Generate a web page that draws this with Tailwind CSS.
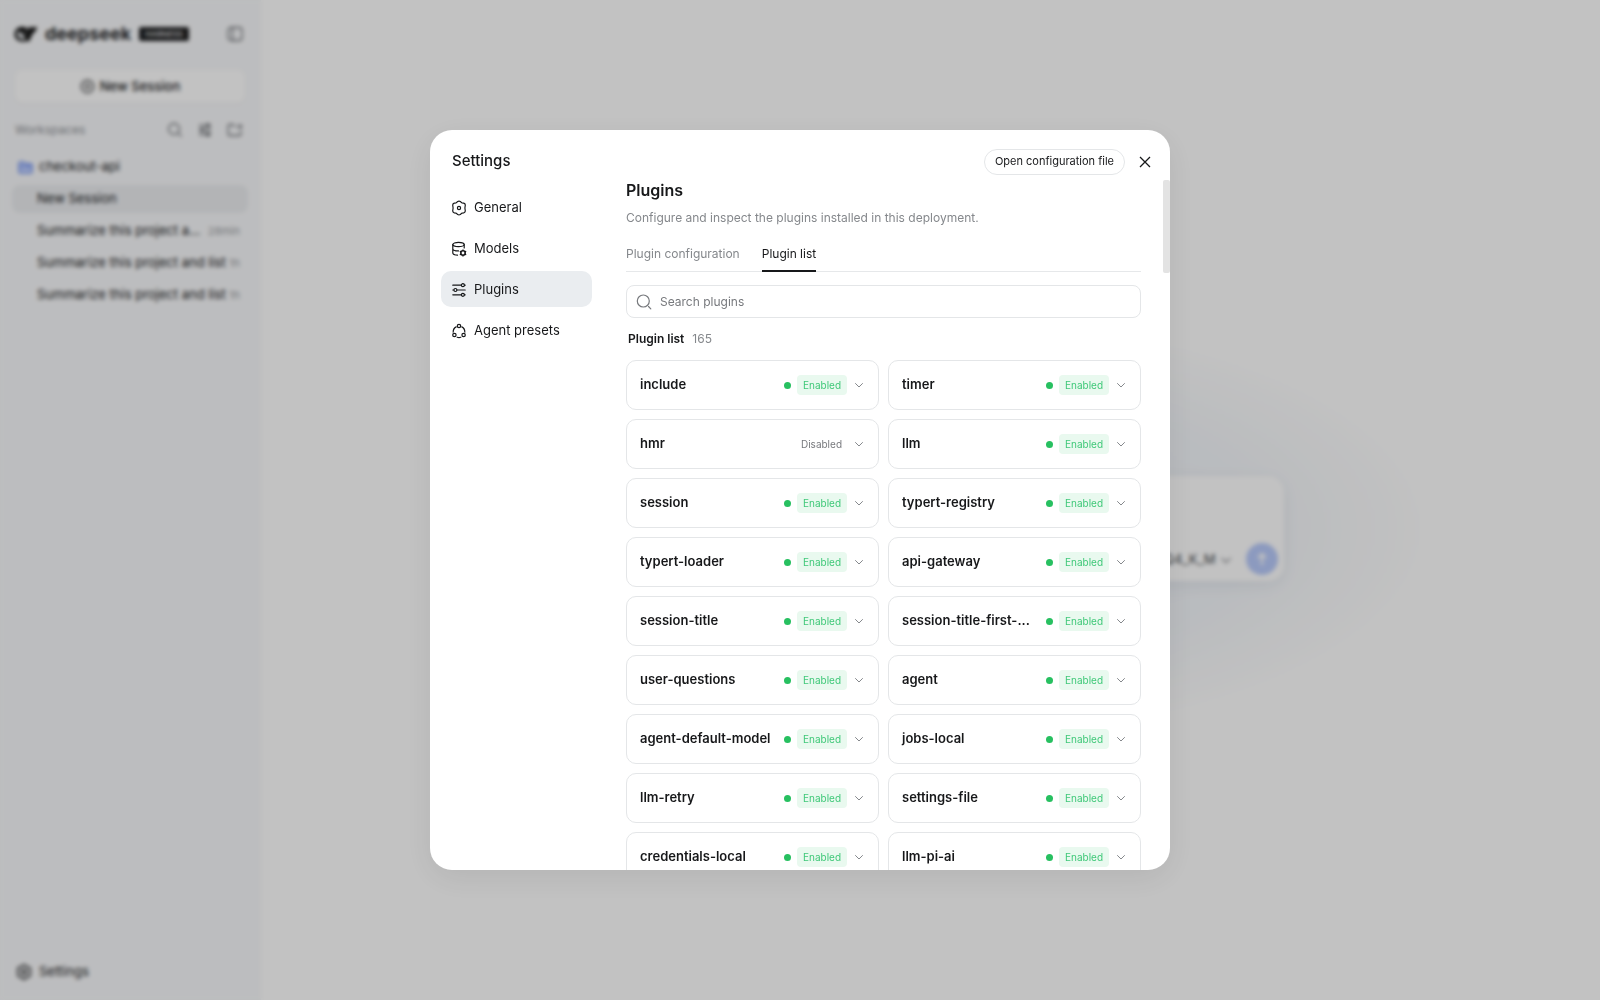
<!DOCTYPE html>
<html lang="en">

<head>
  <meta charset="UTF-8" />
  <meta name="viewport" content="width=device-width, initial-scale=1.0" />
  <title>Settings - Plugins</title>
  <script src="https://cdn.jsdelivr.net/npm/@tailwindcss/browser@4"></script>
</head>

<body class="h-screen overflow-hidden bg-white font-['Inter','Liberation_Sans',sans-serif] text-[#17181a]">

  <div class="flex h-full">
    <!-- sidebar -->
    <aside class="flex w-[261px] shrink-0 flex-col bg-[#f8f9fb] pr-[13px] pb-[15px] pl-3">
      <div class="flex items-center pt-[22px] pr-[5px] pl-[2px]">
        <svg class="h-[18px] w-6" viewBox="0 0 24 18" fill="none">
          <path d="M.5 9.500C.5 5 4 1.800 8 1.800c3 0 4.500 1.200 6.500 2.700.8-1.200.2-2.300.8-3.300.8 1.200 2 1.600 3.200 1.300C20 2 21.500 1.800 23 1.800c-.5 3.500-2 5.700-4.300 6.500-.7 3-1.900 5-3.500 6.300l1.500 1.600c-1.500.4-2.700 0-3.700-.5-1.200.6-2.500.9-4 .9-5 0-8.500-3-8.500-7.100Z" fill="#111" />
          <path d="M3 7c2.500-.8 5 .5 6.200 2.700.8 1.600 2 3 3.300 3.800C7.500 16 2.500 12.500 3 7Z" fill="#dcdee1" />
          <path d="M10.500 6.500c1.500 0 2.700 1 2.700 2.500" stroke="#dcdee1" />
        </svg>
        <span class="ml-[7px] text-[18px] leading-6 font-bold text-[#242527]">deepseek</span>
        <span class="ml-2 flex h-[14px] w-[50px] items-center justify-center rounded-[2px] bg-[#1d1e20] text-[8px] text-white">HARNESS</span>
        <button class="ml-auto text-[#66696e]" aria-label="Toggle sidebar">
          <svg class="size-4" viewBox="0 0 16 16" fill="none" stroke="currentColor" stroke-width="1.300">
            <rect x="1" y="1.500" width="14" height="13" rx="3" />
            <path d="M5.500 2v12" />
          </svg>
        </button>
      </div>

      <button class="mx-[3px] mt-6 flex h-[33px] items-center justify-center gap-[5px] rounded-lg bg-white text-[13px] font-medium shadow-[0_1px_2px_rgba(0,0,0,0.05)]">
        <svg class="size-[15px]" viewBox="0 0 16 16" fill="none" stroke="currentColor" stroke-width="1.300">
          <circle cx="8" cy="8" r="6.500" />
          <path d="M8 5v6M5 8h6" />
        </svg>
        New Session
      </button>

      <div class="mt-[15px] flex h-6 items-center gap-[14px] pr-[5px] pl-[3px] text-[#66696e]">
        <span class="mr-auto text-[12px] text-[#8b8e93]">Workspaces</span>
        <button aria-label="Search sessions">
          <svg class="size-4" viewBox="0 0 16 16" fill="none" stroke="currentColor" stroke-width="1.300">
            <circle cx="7" cy="7" r="5.500" />
            <path d="m11.500 11.500 3 3" />
          </svg>
        </button>
        <button aria-label="Filter sessions">
          <svg class="size-4" viewBox="0 0 16 16" fill="none" stroke="currentColor" stroke-width="1.300">
            <path d="M2 3.500h12M2 8h12M2 12.500h12" />
            <circle cx="11" cy="3.500" r="1.500" />
            <circle cx="5" cy="8" r="1.500" />
            <circle cx="11" cy="12.500" r="1.500" />
          </svg>
        </button>
        <button aria-label="Add workspace">
          <svg class="size-4" viewBox="0 0 16 16" fill="none" stroke="currentColor" stroke-width="1.300">
            <path d="M8.500 4H7L5.500 2.500h-3c-.8 0-1.300.5-1.300 1.300v8.400c0 .8.500 1.300 1.300 1.300h10c.8 0 1.300-.5 1.300-1.300V8.500M13 2v5M10.500 4.500h5" />
          </svg>
        </button>
      </div>

      <div class="mt-[13px] flex h-6 items-center gap-[6px] pl-[6px] text-[13px]">
        <svg class="size-[15px]" viewBox="0 0 16 16" fill="#c3d2ff" stroke="#6a8cee" stroke-width="1.400">
          <path d="M1 3.500C1 2.500 1.500 2 2.500 2H6l1.500 2h6c1 0 1.500.5 1.500 1.500v7c0 1-.5 1.500-1.500 1.500h-11C1.500 14 1 13.500 1 12.500z" />
          <path d="M1 7h14" />
        </svg>
        checkout-api
      </div>
      <ul class="mt-[6px] flex flex-col gap-1 text-[13px]">
        <li class="flex h-7 items-center rounded-lg bg-[#ebedf0] px-[25px]">New Session</li>
        <li class="flex h-7 items-center justify-between pr-2 pl-[25px] whitespace-nowrap">
          <span>Summarize this project a...</span>
          <span class="text-[11px] text-[#9a9da2]">28min</span>
        </li>
        <li class="flex h-7 items-center justify-between pr-2 pl-[25px] whitespace-nowrap">
          <span>Summarize this project and list</span>
          <span class="text-[11px] text-[#9a9da2]">1h</span>
        </li>
        <li class="flex h-7 items-center justify-between pr-2 pl-[25px] whitespace-nowrap">
          <span>Summarize this project and list</span>
          <span class="text-[11px] text-[#9a9da2]">1h</span>
        </li>
      </ul>

      <button class="mt-auto flex h-[26px] items-center gap-[7px] pl-1 text-[13px]">
        <svg class="size-4" viewBox="0 0 16 16" fill="none" stroke="currentColor" stroke-width="1.500" stroke-linejoin="round">
          <path d="M6.700 1.500Q8 .7 9.300 1.500L10.900 2.900 12.700 3.200Q14.200 3.600 14.300 5L13.900 8 14.300 11Q14.200 12.400 12.700 12.800L10.900 13.100 9.300 14.500Q8 15.300 6.700 14.500L5.100 13.100 3.300 12.800Q1.800 12.400 1.700 11L2.100 8 1.700 5Q1.800 3.600 3.300 3.200L5.100 2.900Z" />
          <circle cx="8" cy="8" r="2" />
        </svg>
        Settings
      </button>
    </aside>

    <!-- chat area -->
    <main class="flex min-w-0 flex-1 items-center justify-center pt-14">
      <div class="relative w-[706px]">
        <div class="absolute -inset-x-36 -inset-y-40 bg-[radial-gradient(closest-side,#f0f3f8_0%,#f4f7fb_65%,#ffffff_100%)]"></div>
        <div class="relative flex h-[105px] items-end justify-end gap-[14px] rounded-2xl bg-white p-[6px] shadow-[0_4px_16px_rgba(30,50,90,0.08)]">
          <div class="flex h-[30px] items-center gap-1 text-[13px] text-[#44474b]">
            Q4_K_M
            <svg class="size-3 text-[#8b8e93]" viewBox="0 0 12 12" fill="none" stroke="currentColor" stroke-width="1.300"><path d="m1.500 4 4.500 4.500L10.500 4" /></svg>
          </div>
          <button class="flex size-8 items-center justify-center rounded-full bg-[#b9cbfb] text-white" aria-label="Send">
            <svg class="size-4" viewBox="0 0 16 16" fill="none" stroke="currentColor" stroke-width="2"><path d="M8 14V3M4 7l4-4 4 4" /></svg>
          </button>
        </div>
      </div>
    </main>
  </div>

  <!-- settings dialog -->
  <div class="fixed inset-0 flex items-center justify-center bg-black/24 backdrop-blur-[2px]">
    <div class="relative flex h-[740px] max-h-full w-[740px] max-w-full flex-col overflow-hidden rounded-[22px] bg-white shadow-[0_8px_32px_rgba(0,0,0,0.08)]" role="dialog" aria-labelledby="dialogTitle">
      <header class="flex h-[50px] shrink-0 items-center pt-[13px] pr-3 pl-[22px]">
        <h1 id="dialogTitle" class="mr-auto text-[15px] font-medium">Settings</h1>
        <button class="h-[26px] rounded-full border border-[#e4e6e8] px-[10px] text-[11px]">Open configuration file</button>
        <button class="ml-[7px] flex size-[26px] items-center justify-center" aria-label="Close">
          <svg class="size-3" viewBox="0 0 12 12" fill="none" stroke="currentColor" stroke-width="1.300"><path d="m1 1 10 10M11 1 1 11" /></svg>
        </button>
      </header>

      <div class="flex min-h-0 flex-1">
        <nav class="flex w-[162px] shrink-0 flex-col gap-[5px] pt-[9px] pl-[11px] text-[13px]">
          <a href="#" class="flex h-9 items-center gap-[7px] rounded-[10px] px-[10px] pt-px">
            <svg class="size-4" viewBox="0 0 16 16" fill="none" stroke="currentColor" stroke-width="1.200" stroke-linejoin="round">
              <path d="M6.700 1.500Q8 .7 9.300 1.500L10.900 2.900 12.700 3.200Q14.200 3.600 14.300 5L13.900 8 14.300 11Q14.200 12.400 12.700 12.800L10.900 13.100 9.300 14.500Q8 15.300 6.700 14.500L5.100 13.100 3.300 12.800Q1.800 12.400 1.700 11L2.100 8 1.700 5Q1.800 3.600 3.300 3.200L5.100 2.900Z" />
              <circle cx="8" cy="8" r="1.600" />
            </svg>
            General
          </a>
          <a href="#" class="flex h-9 items-center gap-[7px] rounded-[10px] px-[10px] pt-px">
            <svg class="size-4" viewBox="0 0 16 16" fill="none" stroke="currentColor" stroke-width="1.200" stroke-linecap="round">
              <ellipse cx="7.500" cy="3.500" rx="5.700" ry="2.200" />
              <path d="M1.800 3.500v8.500c0 1.100 2 2 4.700 2.200M13.200 3.500v3.500M1.800 7.700c0 1.300 2.500 2.200 5.700 2.200" />
              <circle cx="12" cy="12" r="2.200" stroke-width="1.600" />
              <path d="M12 8.900v.3M12 14.800v.3M9.300 10.400l.3.200M14.400 13.400l.3.200M9.300 13.600l.3-.2M14.400 10.600l.3-.2" />
            </svg>
            Models
          </a>
          <a href="#" class="flex h-9 items-center gap-[7px] rounded-[10px] bg-[#eaedf0] px-[10px] pt-px" aria-current="page">
            <svg class="size-4" viewBox="0 0 16 16" fill="none" stroke="currentColor" stroke-width="1.200" stroke-linecap="round">
              <path d="M1.800 3.200h8.500M13.500 3.200h.7M1.800 8h1M6 8h8.200M1.800 12.800h8.500M13.500 12.800h.7" />
              <circle cx="11.900" cy="3.200" r="1.500" />
              <circle cx="4.400" cy="8" r="1.500" />
              <circle cx="11.900" cy="12.800" r="1.500" />
            </svg>
            Plugins
          </a>
          <a href="#" class="flex h-9 items-center gap-[7px] rounded-[10px] px-[10px] pt-px">
            <svg class="size-4" viewBox="0 0 16 16" fill="none" stroke="currentColor" stroke-width="1.200" stroke-linecap="round">
              <circle cx="8" cy="3" r="1.700" />
              <circle cx="3.400" cy="12" r="1.700" />
              <circle cx="12.600" cy="12" r="1.700" />
              <path d="M5.200 3.900A5.600 5.600 0 0 0 2.200 9.100M10.800 3.900a5.600 5.600 0 0 1 3 5.200M6.200 14.300a5.600 5.600 0 0 0 3.600 0" />
            </svg>
            Agent presets
          </a>
        </nav>

        <section class="min-w-0 flex-1 overflow-y-auto pr-[29px] pl-[34px] [scrollbar-width:none]">
          <h2 class="text-[16px] leading-5 font-semibold">Plugins</h2>
          <p class="mt-[10px] text-[12px] leading-4 text-[#85888c]">Configure and inspect the plugins installed in this deployment.</p>

          <div class="mt-5 flex gap-[22px] border-b border-[#e6e8ea] text-[12px] leading-4" role="tablist">
            <button class="-mb-px border-b-2 border-transparent pb-2 text-[#85888c]" role="tab">Plugin configuration</button>
            <button class="-mb-px border-b-2 border-[#17181a] pb-2" role="tab" aria-selected="true">Plugin list</button>
          </div>

          <label class="mt-[13px] flex h-[33px] items-center gap-2 rounded-lg border border-[#e4e6e8] px-[9px]">
            <svg class="size-4 text-[#77797d]" viewBox="0 0 16 16" fill="none" stroke="currentColor" stroke-width="1.200" stroke-linecap="round">
              <circle cx="7.300" cy="7" r="6" />
              <path d="m12.500 12.500 2.300 2.300" />
            </svg>
            <input type="text" placeholder="Search plugins" aria-label="Search plugins" class="min-w-0 flex-1 text-[12px] outline-none placeholder:text-[#77797d]" />
          </label>

          <div class="mt-[13px] flex gap-2 pl-[2px] text-[12px] leading-4">
            <h3 class="font-semibold">Plugin list</h3>
            <span class="text-[#85888c]">165</span>
          </div>

          <div id="plugins" class="mt-[13px] grid grid-cols-2 gap-x-[9px] gap-y-[9px] pb-6"></div>
        </section>
      </div>

      <!-- scrollbar thumb -->
      <div class="absolute top-[50px] right-0 h-[93px] w-[7px] rounded-[2px] bg-[#e3e3e3]"></div>
    </div>
  </div>

  <script>
    const plugins = [
      ["include", true], ["timer", true],
      ["hmr", false], ["llm", true],
      ["session", true], ["typert-registry", true],
      ["typert-loader", true], ["api-gateway", true],
      ["session-title", true], ["session-title-first-...", true],
      ["user-questions", true], ["agent", true],
      ["agent-default-model", true], ["jobs-local", true],
      ["llm-retry", true], ["settings-file", true],
      ["credentials-local", true], ["llm-pi-ai", true],
    ];

    const enabledBadge = `
      <span class="size-[7px] shrink-0 rounded-full bg-[#27c060]"></span>
      <span class="ml-[6px] w-[50px] rounded-[4px] bg-[#e9f9ef] text-center text-[10px] leading-5 text-[#3fc878]">Enabled</span>`;
    const disabledBadge = `
      <span class="px-[5px] text-[10px] leading-5 text-[#77797d]">Disabled</span>`;

    document.getElementById("plugins").innerHTML = plugins.map(([name, enabled]) => `
      <button class="flex h-[50px] min-w-0 items-center rounded-[10px] border border-[#e4e6e8] px-[13px] text-left">
        <span class="mr-auto text-[13px] font-semibold whitespace-nowrap">${name}</span>
        ${enabled ? enabledBadge : disabledBadge}
        <svg class="ml-[6px] size-3 shrink-0 text-[#85888c]" viewBox="0 0 12 12" fill="none" stroke="currentColor" stroke-linecap="round" stroke-linejoin="round"><path d="m2.500 4.500 3.500 3.500 3.500-3.500" /></svg>
      </button>`).join("");
  </script>
</body>

</html>
